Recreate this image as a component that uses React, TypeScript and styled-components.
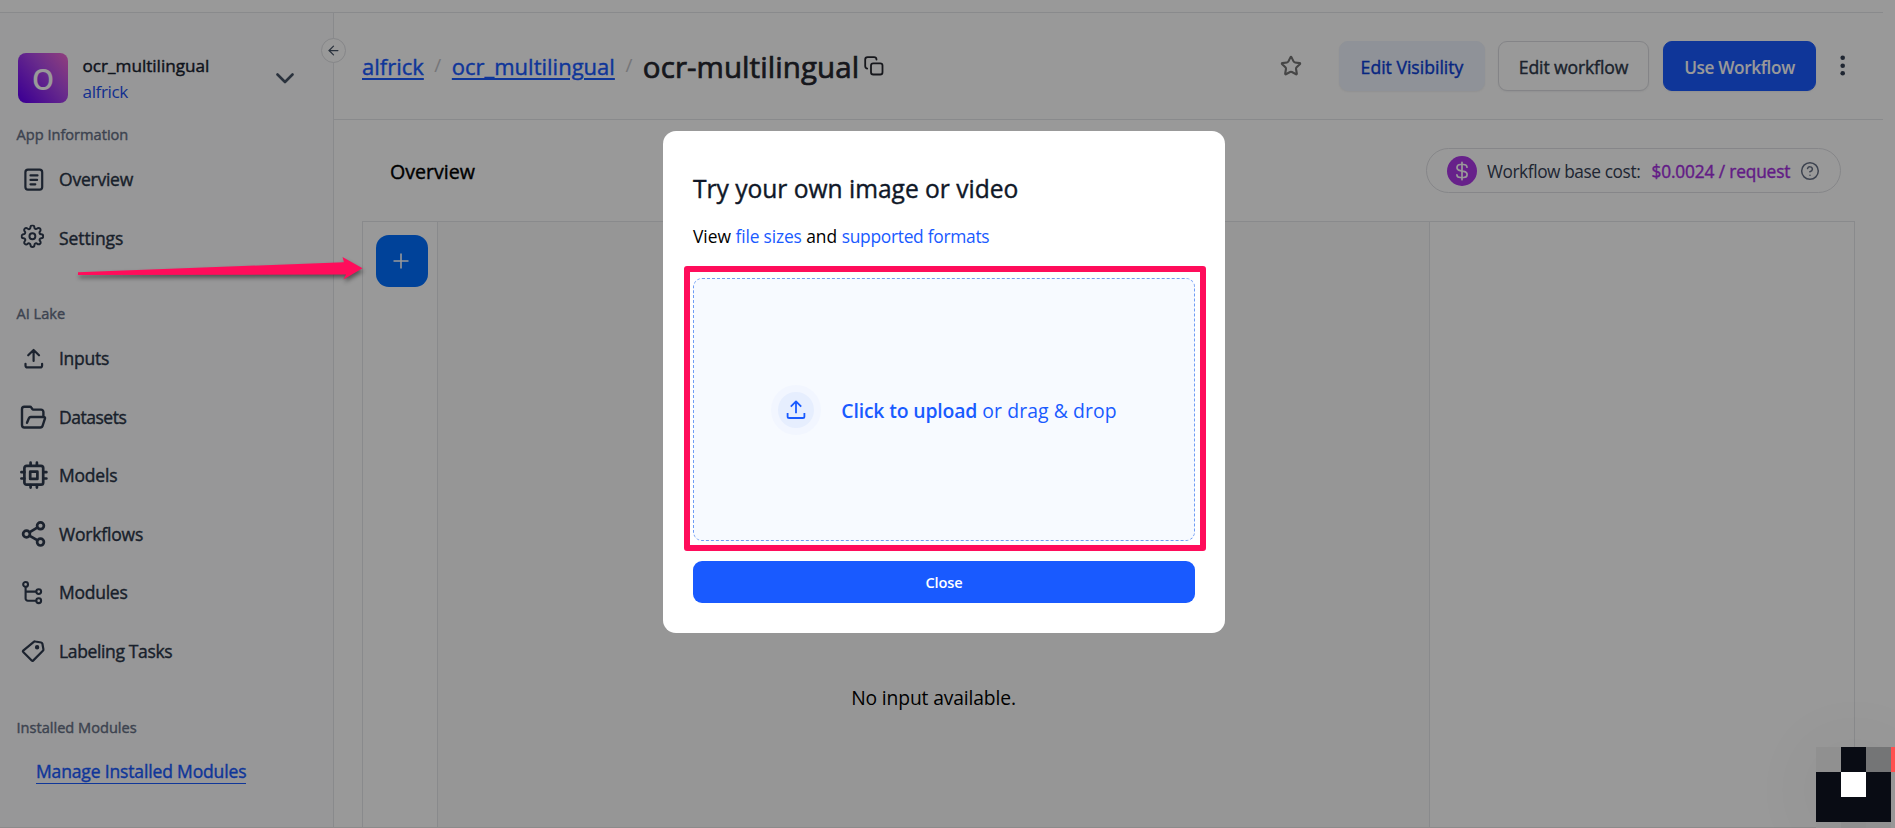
import React from "react";
import styled, { createGlobalStyle, css } from "styled-components";
import { ArrowLeft, CircleHelp, Star } from "lucide-react";
import { FiSettings } from "react-icons/fi";

const GlobalStyle = createGlobalStyle`
  * { box-sizing: border-box; }
  body {
    margin: 0;
    background: #fff;
    color: #101828;
    font-family: "Open Sans", "Noto Sans", sans-serif;
    overflow: hidden;
  }
  a { color: #195aff; text-decoration: none; }
`;

const line = "#e5e6ea";

/* Open Sans has no static medium weight, so a thin stroke thickens the regular one */
const medium = css`
  font-weight: 400;
  -webkit-text-stroke: 0.4px currentColor;
`;

const Page = styled.div`
  position: relative;
  display: flex;
  flex-direction: column;
  width: 100%;
  height: 828px;
  padding-right: 12px;
  background: #fff;
  overflow: hidden;
`;

const TopStrip = styled.div`
  flex: none;
  height: 13px;
  border-bottom: 1px solid ${line};
`;

const Body = styled.div`
  flex: 1;
  display: flex;
  min-height: 0;
`;

/* ---------- sidebar ---------- */

const Sidebar = styled.aside`
  position: relative;
  flex: none;
  width: 334px;
  border-right: 1px solid ${line};
  background: #fcfcfd;
`;

const CollapseButton = styled.button`
  position: absolute;
  top: 25px;
  right: -13px;
  display: flex;
  align-items: center;
  justify-content: center;
  width: 25px;
  height: 25px;
  padding: 0;
  border: 1px solid #dfe0e4;
  border-radius: 50%;
  background: #fff;
  color: #475467;
`;

const AppSwitcher = styled.div`
  display: flex;
  align-items: center;
  height: 52px;
  margin: 39px 39px 18px 18px;
`;

const Avatar = styled.div`
  display: flex;
  align-items: center;
  justify-content: center;
  width: 50px;
  height: 50px;
  padding-top: 2px;
  border-radius: 8px;
  background: linear-gradient(50deg, #6a04f5 8%, #b04ae8 60%, #f26ad0 100%);
  color: #fff;
  font-size: 28px;
  font-weight: 600;
  line-height: 48px;
`;

const AppNames = styled.div`
  flex: 1;
  padding-top: 1px;
  margin-left: 14.5px;
  font-size: 17.2px;
  line-height: 26px;
`;

const AppName = styled.div`
  ${medium}
  color: #182230;
  letter-spacing: -0.03px;
`;

const AppOwner = styled.div`
  color: #1e50f0;
  letter-spacing: -0.42px;
`;

const Section = styled.section`
  margin-bottom: 34px;
`;

const SectionLabel = styled.h2`
  ${medium}
  margin: 0 0 4px;
  padding-left: 16.5px;
  color: #667085;
  font-size: 14.6px;
  line-height: 24px;
`;

const NavItem = styled.div<{ $track: number }>`
  ${medium}
  display: flex;
  align-items: center;
  gap: 11px;
  height: 58.5px;
  padding-left: 20px;
  color: #2b3648;
  font-size: 17.5px;
  letter-spacing: ${(p) => p.$track}px;

  svg { flex: none; color: #2f3b4f; }
`;

const ModulesSection = styled(Section)`
  padding-top: 1px;
`;

const ManageLink = styled.a`
  ${medium}
  display: inline-block;
  margin: 16px 0 0 36px;
  border-bottom: 1px solid #195aff;
  font-size: 17.5px;
  line-height: 24px;
  letter-spacing: -0.15px;
`;

/* ---------- main ---------- */

const Main = styled.main`
  flex: 1;
  display: flex;
  flex-direction: column;
  min-width: 0;
`;

const Header = styled.header`
  flex: none;
  display: flex;
  align-items: center;
  height: 107px;
  padding-left: 28px;
  border-bottom: 1px solid ${line};
`;

const Crumb = styled.a`
  ${medium}
  font-size: 22px;
  text-decoration: underline;
  text-decoration-thickness: 2px;
  text-underline-offset: 3px;
`;

const Slash = styled.span`
  width: 28px;
  padding-bottom: 2px;
  color: #c4c4c9;
  font-size: 19px;
  text-align: center;
`;

const Title = styled.h1`
  margin: 0 5px 0 0;
  color: #26272f;
  font-size: 29.5px;
  font-weight: 400;
  letter-spacing: 0.07px;
  -webkit-text-stroke: 0.7px currentColor;
`;

const Actions = styled.div`
  display: flex;
  align-items: center;
  margin-left: auto;
  padding-right: 33px;

  > svg:first-child { margin-right: 37px; color: #757575; }
`;

const Button = styled.button<{ $kind: "soft" | "outline" | "primary"; $width: number; $track: number }>`
  width: ${(p) => p.$width}px;
  height: 50px;
  margin-right: ${(p) => (p.$kind === "primary" ? 22 : p.$kind === "soft" ? 13 : 14)}px;
  padding: 2px 0 0;
  border: 1px solid ${(p) => ({ soft: "#eff4fd", outline: "#dcdde2", primary: "#195aff" })[p.$kind]};
  border-radius: 9px;
  background: ${(p) => ({ soft: "#eff4fd", outline: "#fff", primary: "#195aff" })[p.$kind]};
  box-shadow: 0 1px 2px rgba(16, 24, 40, 0.06);
  color: ${(p) => ({ soft: "#0c40d8", outline: "#2f3a4c", primary: "#fff" })[p.$kind]};
  font: ${(p) => (p.$kind === "primary" ? "600 17.2px" : "400 17.6px")} "Open Sans", sans-serif;
  letter-spacing: ${(p) => p.$track}px;
  -webkit-text-stroke: ${(p) => (p.$kind === "primary" ? 0 : 0.4)}px currentColor;
  white-space: nowrap;
`;

const TabRow = styled.div`
  flex: none;
  display: flex;
  align-items: center;
  justify-content: space-between;
  height: 101px;
  padding: 0 42px 0 56px;
`;

const Tab = styled.div`
  ${medium}
  padding-top: 2px;
  color: #000;
  font-size: 19.6px;
`;

const CostPill = styled.div`
  display: flex;
  align-items: center;
  width: 415px;
  height: 45px;
  padding: 0 20px;
  border: 1px solid #dfe0e4;
  border-radius: 23px;
  white-space: nowrap;
`;

const Coin = styled.span`
  display: flex;
  align-items: center;
  justify-content: center;
  width: 30px;
  height: 30px;
  margin-right: 10px;
  border-radius: 50%;
  background: #ac37e6;
`;

const CostLabel = styled.span`
  width: 165px;
  padding-top: 1px;
  color: #344054;
  font-size: 17.3px;
  letter-spacing: -0.41px;
`;

const CostValue = styled.span`
  ${medium}
  width: 149px;
  padding-top: 1px;
  color: #a42fe0;
  font-size: 17.3px;
  letter-spacing: -0.14px;
`;

const Workspace = styled.div`
  flex: 1;
  display: grid;
  grid-template-columns: 75px 992px 1fr;
  margin: 0 28px 0 28px;
  border: 1px solid ${line};
  border-bottom: none;
`;

const ToolColumn = styled.div`
  padding: 13px;
  border-right: 1px solid ${line};
`;

const AddButton = styled.button`
  display: flex;
  align-items: center;
  justify-content: center;
  width: 52px;
  height: 52px;
  padding: 0 2px 1px 0;
  border: none;
  border-radius: 13px;
  background: #006eff;
`;

const PreviewColumn = styled.div`
  padding-top: 462px;
  border-right: 1px solid ${line};
  background: #fbfbfb;
  color: #000;
  font-size: 19.3px;
  line-height: 28px;
  letter-spacing: -0.14px;
  text-align: center;
`;

/* ---------- layers ---------- */

const Backdrop = styled.div`
  position: absolute;
  inset: 0;
  display: flex;
  align-items: flex-start;
  padding: 131px 0 0 663px;
  background: rgba(0, 0, 0, 0.4);
`;

const Dialog = styled.div`
  position: relative;
  width: 562px;
  height: 502px;
  padding: 42px 30px 30px;
  border-radius: 13px;
  background: #fff;
`;

const DialogTitle = styled.h2`
  ${medium}
  margin: 0 0 18px;
  color: #101828;
  font-size: 24.6px;
  line-height: 32px;
  letter-spacing: -0.02px;
`;

const Hint = styled.p`
  display: flex;
  margin: 0 0 29px;
  color: #000;
  font-size: 17.4px;
  line-height: 26px;
  white-space: pre;
`;

const HintLink = styled.a<{ $track: number }>`
  letter-spacing: ${(p) => p.$track}px;
`;

const DropZone = styled.div`
  display: flex;
  align-items: center;
  justify-content: center;
  height: 263px;
  border: 1px dashed #6f9cf5;
  border-radius: 9px;
  background: #f7faff;
  color: #195aff;
  font-size: 19.4px;
  white-space: pre;
`;

const UploadBadge = styled.span`
  display: flex;
  align-items: center;
  justify-content: center;
  width: 50px;
  height: 50px;
  margin-right: 20px;
  border: 7px solid #f2f6ff;
  border-radius: 50%;
  background: #e6eefe;
`;

const UploadText = styled.span`
  padding-top: 2px;
  letter-spacing: 0.08px;
`;

const Strong = styled.strong`
  font-weight: 600;
  letter-spacing: -0.16px;
`;

const CloseButton = styled.button`
  width: 100%;
  height: 42px;
  margin-top: 20px;
  padding: 0 0 1px;
  border: none;
  border-radius: 9px;
  background: #195aff;
  color: #fff;
  font: 600 14.6px "Open Sans", sans-serif;
  letter-spacing: -0.15px;
`;

const Highlight = styled.div`
  position: absolute;
  top: 135px;
  left: 21px;
  width: 522px;
  height: 285px;
  border: 6px solid #ff0d5b;
  border-radius: 3px;
  pointer-events: none;
`;

const Pointer = styled.svg`
  position: absolute;
  top: 250px;
  left: 70px;
  filter: drop-shadow(1px 3px 2px rgba(0, 0, 0, 0.45));
`;

const Widget = styled.div`
  position: absolute;
  right: 0;
  bottom: 0;
  display: grid;
  grid-template-columns: 25px 25px 25px 4px;
  grid-template-rows: 25px 25px 25px 6px;
`;

const WidgetGlow = styled.div`
  position: absolute;
  right: 10px;
  bottom: 12px;
  width: 60px;
  height: 60px;
  border-radius: 50%;
  box-shadow: 0 4px 80px 10px rgba(0, 0, 0, 0.07);
`;

const Cell = styled.span<{ $c: string }>`
  background: ${(p) => p.$c};
`;

const BottomEdge = styled.div`
  position: absolute;
  left: 0;
  right: 0;
  bottom: 0;
  height: 1px;
  background: #8b8b8b;
`;

/* ---------- icons ---------- */

function NavSvg({ w = 2.2, children }: { w?: number; children: React.ReactNode }) {
  return (
    <svg width="28" height="28" viewBox="0 0 28 28" fill="none" stroke="currentColor" strokeWidth={w} strokeLinecap="round" strokeLinejoin="round">
      {children}
    </svg>
  );
}

const icons = {
  overview: (
    <NavSvg>
      <rect x="5.4" y="4.6" width="16.8" height="20" rx="2.6" />
      <path d="M10.5 10.4h7M10.5 14.9h6.6M10.5 19.3h4.8" />
    </NavSvg>
  ),
  settings: (
    <NavSvg>
      <FiSettings x={0.6} y={0.4} size={23.6} />
    </NavSvg>
  ),
  inputs: (
    <NavSvg>
      <path d="M13.6 17V6.2M8.2 11.3l5.4-5.3 5.4 5.3M5.5 19.8v1.6a2 2 0 0 0 2 2h12.6a2 2 0 0 0 2-2v-1.6" />
    </NavSvg>
  ),
  datasets: (
    <NavSvg w={2.4}>
      <path d="M23.4 13V9a2.4 2.4 0 0 0-2.4-2.4h-7.6a1.4 1.4 0 0 1-1.2-.7l-1-1.5A1.4 1.4 0 0 0 10 3.7H4.3A2.4 2.4 0 0 0 2 6.1v16a2.4 2.4 0 0 0 2.4 2.4h15.8a2.6 2.6 0 0 0 2.5-2l2.3-7.2a1 1 0 0 0-1-1.3H10.7a2 2 0 0 0-1.8 1.2L7 19.8" />
    </NavSvg>
  ),
  models: (
    <NavSvg w={2.7}>
      <rect x="4.4" y="4.9" width="18.8" height="18.8" rx="2.2" />
      <rect x="10.2" y="10.7" width="7.2" height="7.2" />
      <path d="M10.6 1.7v3M16.9 1.7v3M10.6 24v2.6M16.9 24v2.6M1.4 11.2h3M1.4 17.5h3M23.4 11.2h3M23.4 17.5h3" />
    </NavSvg>
  ),
  workflows: (
    <NavSvg w={2.7}>
      <circle cx="6.5" cy="14" r="3.4" />
      <circle cx="20.5" cy="5.8" r="3.4" />
      <circle cx="20.5" cy="22.1" r="3.4" />
      <path d="M9.8 12.1l7.4-4.4M9.8 15.9l7.4 4.3" />
    </NavSvg>
  ),
  modules: (
    <NavSvg w={2.1}>
      <circle cx="5.6" cy="6.4" r="2.4" />
      <circle cx="18.7" cy="13.6" r="2.4" />
      <circle cx="18.7" cy="22.7" r="2.4" />
      <path d="M5.6 9v11.5a2.2 2.2 0 0 0 2.2 2.2h8.3M5.6 13.6h10.5" />
    </NavSvg>
  ),
  labeling: (
    <NavSvg>
      <path d="M3.2 13.6a1 1 0 0 0 0 1.4l8.5 8.6a1 1 0 0 0 1.4 0l9.8-9.8a1.6 1.6 0 0 0 .5-1.5l-1-5.6a1.6 1.6 0 0 0-1.3-1.2l-5.8-1a1.6 1.6 0 0 0-1.5.4z" />
      <circle cx="17.1" cy="10.3" r="1.1" fill="currentColor" />
    </NavSvg>
  ),
};

const lakeItems: { icon: React.ReactNode; label: string; track: number }[] = [
  { icon: icons.inputs, label: "Inputs", track: -0.27 },
  { icon: icons.datasets, label: "Datasets", track: -0.48 },
  { icon: icons.models, label: "Models", track: -0.2 },
  { icon: icons.workflows, label: "Workflows", track: -0.18 },
  { icon: icons.modules, label: "Modules", track: -0.26 },
  { icon: icons.labeling, label: "Labeling Tasks", track: -0.36 },
];

const Chevron = () => (
  <svg width="18" height="11" viewBox="0 0 18 11" fill="none" stroke="#475467" strokeWidth="2.6" strokeLinecap="round" strokeLinejoin="round">
    <path d="M1.5 1.5L9 9l7.5-7.5" />
  </svg>
);

const CopyIcon = () => (
  <svg width="20" height="20" viewBox="0 0 20 20" fill="none" stroke="#26272f" strokeWidth="1.8" strokeLinecap="round">
    <rect x="7" y="7.3" width="11.5" height="11.2" rx="2.3" />
    <path d="M3.2 12.6C1.8 12.3 1.2 11.5 1.2 10V3.6A2.4 2.4 0 0 1 3.6 1.2h6.4c1.5 0 2.4.7 2.5 2.3" />
  </svg>
);

const DotsIcon = () => (
  <svg width="12" height="24" viewBox="0 0 12 24" fill="#344054">
    <circle cx="4.7" cy="3.7" r="2.3" />
    <circle cx="4.7" cy="11.7" r="2.3" />
    <circle cx="4.7" cy="19.3" r="2.3" />
  </svg>
);

const DollarIcon = () => (
  <svg width="14" height="20" viewBox="0 0 14 20" fill="none" stroke="#fff" strokeWidth="1.7" strokeLinecap="round">
    <path d="M7 1.3v17.4M12 6.2C12 4.4 10.4 3.5 8.6 3.5H5.4C3.4 3.5 2 4.8 2 6.6s1.3 2.7 3.2 3.1l3.6.7c2 .4 3.3 1.3 3.3 3.1s-1.5 3-3.5 3H5.4c-1.9 0-3.5-1-3.5-2.7" />
  </svg>
);

const UploadIcon = () => (
  <svg width="20" height="20" viewBox="0 0 20 20" fill="none" stroke="#195aff" strokeWidth="1.8" strokeLinejoin="round">
    <path d="M10 13.2V2M4.8 6.6L10 1.4l5.2 5.2M1.6 13v3.4a1.6 1.6 0 0 0 1.6 1.6h13.6a1.6 1.6 0 0 0 1.6-1.6V13" />
  </svg>
);

const widgetCells = [
  "#909090", "#090c14", "#747576", "#ff5050",
  "#090c14", "#ffffff", "#090c14", "#979797",
  "#090c14", "#090c14", "#090c14", "#979797",
  "#949494", "#8f8f8f", "#919191", "#979797",
];

export default function App() {
  return (
    <Page>
      <GlobalStyle />
      <TopStrip />
      <Body>
        <Sidebar>
          <CollapseButton aria-label="Collapse">
            <ArrowLeft size={15} strokeWidth={2} />
          </CollapseButton>
          <AppSwitcher>
            <Avatar>O</Avatar>
            <AppNames>
              <AppName>ocr_multilingual</AppName>
              <AppOwner>alfrick</AppOwner>
            </AppNames>
            <Chevron />
          </AppSwitcher>
          <Section>
            <SectionLabel>App Information</SectionLabel>
            <NavItem $track={-0.23}>{icons.overview}Overview</NavItem>
            <NavItem $track={-0.08}>{icons.settings}Settings</NavItem>
          </Section>
          <Section>
            <SectionLabel>AI Lake</SectionLabel>
            {lakeItems.map((item) => (
              <NavItem key={item.label} $track={item.track}>
                {item.icon}
                {item.label}
              </NavItem>
            ))}
          </Section>
          <ModulesSection>
            <SectionLabel>Installed Modules</SectionLabel>
            <ManageLink>Manage Installed Modules</ManageLink>
          </ModulesSection>
        </Sidebar>
        <Main>
          <Header>
            <Crumb>alfrick</Crumb>
            <Slash>/</Slash>
            <Crumb>ocr_multilingual</Crumb>
            <Slash>/</Slash>
            <Title>ocr-multilingual</Title>
            <CopyIcon />
            <Actions>
              <Star size={22} strokeWidth={2.3} />
              <Button $kind="soft" $width={146} $track={0}>Edit Visibility</Button>
              <Button $kind="outline" $width={151} $track={-0.13}>Edit workflow</Button>
              <Button $kind="primary" $width={153} $track={-0.37}>Use Workflow</Button>
              <DotsIcon />
            </Actions>
          </Header>
          <TabRow>
            <Tab>Overview</Tab>
            <CostPill>
              <Coin><DollarIcon /></Coin>
              <CostLabel>Workflow base cost:</CostLabel>
              <CostValue>$0.0024 / request</CostValue>
              <CircleHelp size={20} strokeWidth={1.8} color="#667085" />
            </CostPill>
          </TabRow>
          <Workspace>
            <ToolColumn>
              <AddButton aria-label="Add">
                <svg width="16" height="16" viewBox="0 0 16 16" stroke="#fff" strokeWidth="1.6">
                  <path d="M8 .5v15M.5 8h15" />
                </svg>
              </AddButton>
            </ToolColumn>
            <PreviewColumn>No input available.</PreviewColumn>
            <div />
          </Workspace>
        </Main>
      </Body>
      <Backdrop>
        <Dialog role="dialog">
          <DialogTitle>Try your own image or video</DialogTitle>
          <Hint>
            {"View "}
            <HintLink $track={-0.17}>file sizes</HintLink>
            {" and "}
            <HintLink $track={-0.29}>supported formats</HintLink>
          </Hint>
          <DropZone>
            <UploadBadge><UploadIcon /></UploadBadge>
            <UploadText><Strong>Click to upload</Strong> or drag &amp; drop</UploadText>
          </DropZone>
          <CloseButton>Close</CloseButton>
          <Highlight />
        </Dialog>
      </Backdrop>
      <BottomEdge />
      <WidgetGlow />
      <Widget>
        {widgetCells.map((c, i) => (
          <Cell key={i} $c={c} />
        ))}
      </Widget>
      <Pointer width="300" height="40" viewBox="0 0 300 40">
        <path d="M8 22.2L274 12.3 272.5 7 292.5 18.3 273.5 29.5 276 24.5 8 25z" fill="#ff0d5b" />
      </Pointer>
    </Page>
  );
}
